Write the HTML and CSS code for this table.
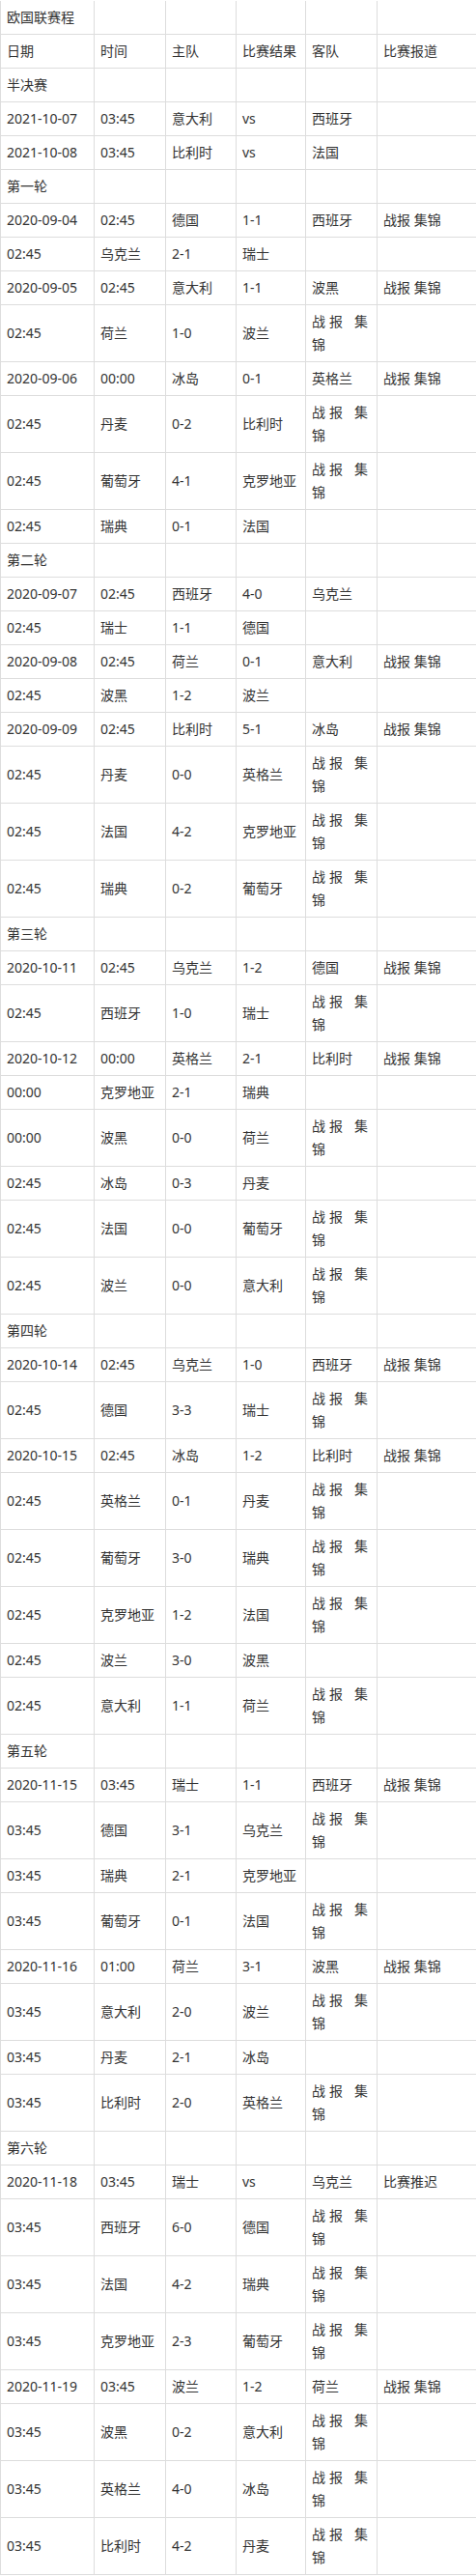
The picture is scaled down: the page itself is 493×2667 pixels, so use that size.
FILE: index.html
```html
<!DOCTYPE html>
<html lang="zh-CN">
<head>
<meta charset="utf-8">
<title>欧国联赛程</title>
<link rel="stylesheet" href="styles.css">
</head>
<body>
<table class="schedule">
<colgroup>
<col class="w1"><col class="w2"><col class="w3"><col class="w4"><col class="w5"><col class="w6">
</colgroup>
<tbody>
<tr><td>欧国联赛程</td><td></td><td></td><td></td><td></td><td></td></tr>
<tr><td>日期</td><td>时间</td><td>主队</td><td>比赛结果</td><td>客队</td><td>比赛报道</td></tr>
<tr><td>半决赛</td><td></td><td></td><td></td><td></td><td></td></tr>
<tr><td>2021-10-07</td><td>03:45</td><td>意大利</td><td>vs</td><td>西班牙</td><td></td></tr>
<tr><td>2021-10-08</td><td>03:45</td><td>比利时</td><td>vs</td><td>法国</td><td></td></tr>
<tr><td>第一轮</td><td></td><td></td><td></td><td></td><td></td></tr>
<tr><td>2020-09-04</td><td>02:45</td><td>德国</td><td>1-1</td><td>西班牙</td><td>战报 集锦</td></tr>
<tr><td>02:45</td><td>乌克兰</td><td>2-1</td><td>瑞士</td><td></td><td></td></tr>
<tr><td>2020-09-05</td><td>02:45</td><td>意大利</td><td>1-1</td><td>波黑</td><td>战报 集锦</td></tr>
<tr><td>02:45</td><td>荷兰</td><td>1-0</td><td>波兰</td><td>战报 集锦</td><td></td></tr>
<tr><td>2020-09-06</td><td>00:00</td><td>冰岛</td><td>0-1</td><td>英格兰</td><td>战报 集锦</td></tr>
<tr><td>02:45</td><td>丹麦</td><td>0-2</td><td>比利时</td><td>战报 集锦</td><td></td></tr>
<tr><td>02:45</td><td>葡萄牙</td><td>4-1</td><td>克罗地亚</td><td>战报 集锦</td><td></td></tr>
<tr><td>02:45</td><td>瑞典</td><td>0-1</td><td>法国</td><td></td><td></td></tr>
<tr><td>第二轮</td><td></td><td></td><td></td><td></td><td></td></tr>
<tr><td>2020-09-07</td><td>02:45</td><td>西班牙</td><td>4-0</td><td>乌克兰</td><td></td></tr>
<tr><td>02:45</td><td>瑞士</td><td>1-1</td><td>德国</td><td></td><td></td></tr>
<tr><td>2020-09-08</td><td>02:45</td><td>荷兰</td><td>0-1</td><td>意大利</td><td>战报 集锦</td></tr>
<tr><td>02:45</td><td>波黑</td><td>1-2</td><td>波兰</td><td></td><td></td></tr>
<tr><td>2020-09-09</td><td>02:45</td><td>比利时</td><td>5-1</td><td>冰岛</td><td>战报 集锦</td></tr>
<tr><td>02:45</td><td>丹麦</td><td>0-0</td><td>英格兰</td><td>战报 集锦</td><td></td></tr>
<tr><td>02:45</td><td>法国</td><td>4-2</td><td>克罗地亚</td><td>战报 集锦</td><td></td></tr>
<tr><td>02:45</td><td>瑞典</td><td>0-2</td><td>葡萄牙</td><td>战报 集锦</td><td></td></tr>
<tr><td>第三轮</td><td></td><td></td><td></td><td></td><td></td></tr>
<tr><td>2020-10-11</td><td>02:45</td><td>乌克兰</td><td>1-2</td><td>德国</td><td>战报 集锦</td></tr>
<tr><td>02:45</td><td>西班牙</td><td>1-0</td><td>瑞士</td><td>战报 集锦</td><td></td></tr>
<tr><td>2020-10-12</td><td>00:00</td><td>英格兰</td><td>2-1</td><td>比利时</td><td>战报 集锦</td></tr>
<tr><td>00:00</td><td>克罗地亚</td><td>2-1</td><td>瑞典</td><td></td><td></td></tr>
<tr><td>00:00</td><td>波黑</td><td>0-0</td><td>荷兰</td><td>战报 集锦</td><td></td></tr>
<tr><td>02:45</td><td>冰岛</td><td>0-3</td><td>丹麦</td><td></td><td></td></tr>
<tr><td>02:45</td><td>法国</td><td>0-0</td><td>葡萄牙</td><td>战报 集锦</td><td></td></tr>
<tr><td>02:45</td><td>波兰</td><td>0-0</td><td>意大利</td><td>战报 集锦</td><td></td></tr>
<tr><td>第四轮</td><td></td><td></td><td></td><td></td><td></td></tr>
<tr><td>2020-10-14</td><td>02:45</td><td>乌克兰</td><td>1-0</td><td>西班牙</td><td>战报 集锦</td></tr>
<tr><td>02:45</td><td>德国</td><td>3-3</td><td>瑞士</td><td>战报 集锦</td><td></td></tr>
<tr><td>2020-10-15</td><td>02:45</td><td>冰岛</td><td>1-2</td><td>比利时</td><td>战报 集锦</td></tr>
<tr><td>02:45</td><td>英格兰</td><td>0-1</td><td>丹麦</td><td>战报 集锦</td><td></td></tr>
<tr><td>02:45</td><td>葡萄牙</td><td>3-0</td><td>瑞典</td><td>战报 集锦</td><td></td></tr>
<tr><td>02:45</td><td>克罗地亚</td><td>1-2</td><td>法国</td><td>战报 集锦</td><td></td></tr>
<tr><td>02:45</td><td>波兰</td><td>3-0</td><td>波黑</td><td></td><td></td></tr>
<tr><td>02:45</td><td>意大利</td><td>1-1</td><td>荷兰</td><td>战报 集锦</td><td></td></tr>
<tr><td>第五轮</td><td></td><td></td><td></td><td></td><td></td></tr>
<tr><td>2020-11-15</td><td>03:45</td><td>瑞士</td><td>1-1</td><td>西班牙</td><td>战报 集锦</td></tr>
<tr><td>03:45</td><td>德国</td><td>3-1</td><td>乌克兰</td><td>战报 集锦</td><td></td></tr>
<tr><td>03:45</td><td>瑞典</td><td>2-1</td><td>克罗地亚</td><td></td><td></td></tr>
<tr><td>03:45</td><td>葡萄牙</td><td>0-1</td><td>法国</td><td>战报 集锦</td><td></td></tr>
<tr><td>2020-11-16</td><td>01:00</td><td>荷兰</td><td>3-1</td><td>波黑</td><td>战报 集锦</td></tr>
<tr><td>03:45</td><td>意大利</td><td>2-0</td><td>波兰</td><td>战报 集锦</td><td></td></tr>
<tr><td>03:45</td><td>丹麦</td><td>2-1</td><td>冰岛</td><td></td><td></td></tr>
<tr><td>03:45</td><td>比利时</td><td>2-0</td><td>英格兰</td><td>战报 集锦</td><td></td></tr>
<tr><td>第六轮</td><td></td><td></td><td></td><td></td><td></td></tr>
<tr><td>2020-11-18</td><td>03:45</td><td>瑞士</td><td>vs</td><td>乌克兰</td><td>比赛推迟</td></tr>
<tr><td>03:45</td><td>西班牙</td><td>6-0</td><td>德国</td><td>战报 集锦</td><td></td></tr>
<tr><td>03:45</td><td>法国</td><td>4-2</td><td>瑞典</td><td>战报 集锦</td><td></td></tr>
<tr><td>03:45</td><td>克罗地亚</td><td>2-3</td><td>葡萄牙</td><td>战报 集锦</td><td></td></tr>
<tr><td>2020-11-19</td><td>03:45</td><td>波兰</td><td>1-2</td><td>荷兰</td><td>战报 集锦</td></tr>
<tr><td>03:45</td><td>波黑</td><td>0-2</td><td>意大利</td><td>战报 集锦</td><td></td></tr>
<tr><td>03:45</td><td>英格兰</td><td>4-0</td><td>冰岛</td><td>战报 集锦</td><td></td></tr>
<tr><td>03:45</td><td>比利时</td><td>4-2</td><td>丹麦</td><td>战报 集锦</td><td></td></tr>
</tbody>
</table>
</body>
</html>
```

FILE: styles.css
```css
html, body {
  margin: 0;
  padding: 0;
  background: #fff;
}

body {
  font-family: "Noto Sans", "Noto Sans CJK SC", sans-serif;
  font-size: 14px;
  color: #333;
}

.schedule {
  border-collapse: separate;
  border-spacing: 0;
  table-layout: fixed;
  width: 493px;
  border-top: 1px solid #fff;
}

.w1 { width: 98px; }
.w2 { width: 74px; }
.w3 { width: 73px; }
.w4 { width: 72px; }
.w5 { width: 74px; }
.w6 { width: 102px; }

.schedule td {
  box-sizing: border-box;
  padding: 5px 6px;
  line-height: 24px;
  border-right: 1px solid #ddd;
  border-bottom: 1px solid #ddd;
  text-align: justify;
  vertical-align: middle;
  word-break: normal;
}

.schedule td:first-child {
  border-left: 1px solid #ddd;
}

.schedule td:nth-child(5) {
  padding-right: 9px;
}

.schedule td:last-child {
  border-right: none;
}
```
